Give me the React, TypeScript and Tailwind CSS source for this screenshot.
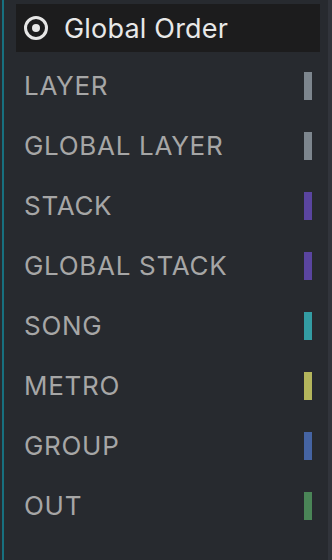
import React from 'react';

interface OrderItem {
  label: string;
  color: string;
}

const items: OrderItem[] = [
  { label: 'LAYER', color: 'bg-[#7d868e]' },
  { label: 'GLOBAL LAYER', color: 'bg-[#7d868e]' },
  { label: 'STACK', color: 'bg-[#5a45a0]' },
  { label: 'GLOBAL STACK', color: 'bg-[#5a45a0]' },
  { label: 'SONG', color: 'bg-[#339ca3]' },
  { label: 'METRO', color: 'bg-[#b3b55c]' },
  { label: 'GROUP', color: 'bg-[#4564a3]' },
  { label: 'OUT', color: 'bg-[#4a8557]' },
];

export default function App() {
  return (
    <div className="w-[332px] h-[560px] flex bg-[#272a2f] font-['Inter',sans-serif] overflow-hidden">
      <div className="w-[2px] shrink-0" />
      <div className="w-[2px] shrink-0 bg-[#17707f]" />
      <div className="flex-1 flex flex-col pt-1 pl-3 pr-2">
        {/* header */}
        <div className="h-12 flex items-center bg-[#1c1c1d] px-2">
          <svg width="24" height="24" viewBox="0 0 24 24" className="shrink-0">
            <circle cx="12" cy="12" r="10.5" fill="none" stroke="#e6e6e6" strokeWidth="3" />
            <circle cx="12" cy="12" r="4" fill="#e6e6e6" />
          </svg>
          <span className="ml-[16px] text-[27px] leading-none text-[#e8e8e8] tracking-[0.2px]">Global Order</span>
        </div>

        {/* list */}
        <div className="flex flex-col pt-1">
          {items.map((item) => (
            <div key={item.label} className="h-[60px] flex items-center justify-between pl-[8px] pr-2">
              <span className="text-[26px] leading-none text-[#a6a6a6] tracking-[0.7px]">{item.label}</span>
              <div className={`w-2 h-7 ${item.color}`} />
            </div>
          ))}
        </div>
      </div>
      <div className="w-[4px] shrink-0 bg-[#31343b]" />
    </div>
  );
}
